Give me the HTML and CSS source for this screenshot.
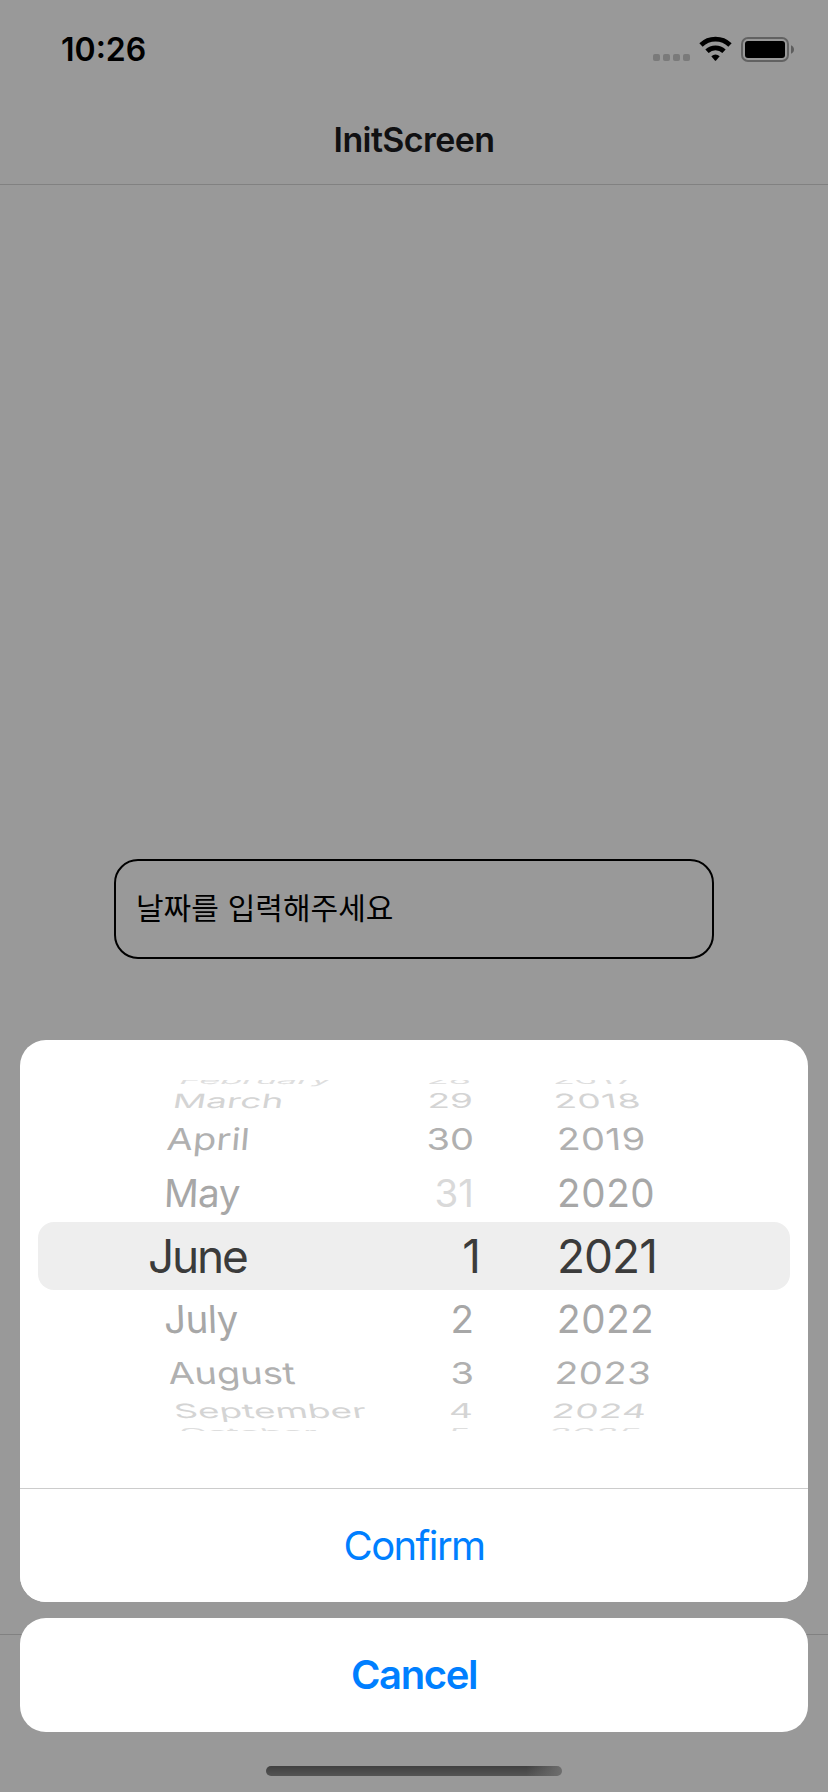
FILE: index.html
```html
<!DOCTYPE html>
<html lang="ko">
<head>
    <meta charset="UTF-8">
    <meta name="viewport" content="width=device-width, initial-scale=1.0">
    <title>InitScreen</title>
    <link rel="stylesheet" href="styles.css">
</head>
<body>
    <div class="screen">
        <div class="status-bar">
            <span class="time">10:26</span>
            <svg class="status-icons" width="146" height="30" viewBox="0 0 146 30">
                <g fill="#cbcbcb">
                    <rect x="3" y="20" width="7" height="7" rx="2"/>
                    <rect x="13" y="20" width="7" height="7" rx="2"/>
                    <rect x="23" y="20" width="7" height="7" rx="2"/>
                    <rect x="33" y="20" width="7" height="7" rx="2"/>
                </g>
                <g fill="none" stroke="#000" stroke-width="4.8">
                    <path d="M51 11 A21 21 0 0 1 80 11"/>
                    <path d="M57 17.2 A12.3 12.3 0 0 1 74 17.2"/>
                </g>
                <path d="M61.3 22.3 Q65.5 18.9 69.7 22.3 L66.1 26.4 Q65.5 27 64.9 26.4 Z"/>
                <rect x="92" y="4" width="46" height="23" rx="6" fill="none" stroke="#a4a4a4" stroke-width="2"/>
                <rect x="95" y="7" width="40" height="17" rx="3"/>
                <path d="M141 11.2 Q144 12.5 144 15.5 Q144 18.5 141 19.8 Z" fill="#9c9c9c"/>
            </svg>
        </div>
        <header class="header">
            <h1>InitScreen</h1>
        </header>
        <main class="content">
            <div class="date-input">날짜를 입력해주세요</div>
        </main>
        <div class="tab-bar"></div>
    </div>

    <div class="overlay">
        <div class="sheet">
            <div class="picker">
                <div class="selection"></div>
                <div class="wheel months">
                    <div class="item up far">February</div>
                    <div class="item up third">March</div>
                    <div class="item up second">April</div>
                    <div class="item up first">May</div>
                    <div class="item selected">June</div>
                    <div class="item down first">July</div>
                    <div class="item down second">August</div>
                    <div class="item down third">September</div>
                    <div class="item down far">October</div>
                </div>
                <div class="wheel days">
                    <div class="item up far">28</div>
                    <div class="item up third">29</div>
                    <div class="item up second">30</div>
                    <div class="item up first disabled">31</div>
                    <div class="item selected">1</div>
                    <div class="item down first">2</div>
                    <div class="item down second">3</div>
                    <div class="item down third">4</div>
                    <div class="item down far">5</div>
                </div>
                <div class="wheel years">
                    <div class="item up far">2017</div>
                    <div class="item up third">2018</div>
                    <div class="item up second">2019</div>
                    <div class="item up first">2020</div>
                    <div class="item selected">2021</div>
                    <div class="item down first">2022</div>
                    <div class="item down second">2023</div>
                    <div class="item down third">2024</div>
                    <div class="item down far">2025</div>
                </div>
            </div>
            <button class="confirm">Confirm</button>
        </div>
        <button class="cancel">Cancel</button>
        <div class="home-indicator"></div>
    </div>
</body>
</html>
```

FILE: styles.css
```css
* {
    box-sizing: border-box;
}

body {
    margin: 0;
    font-family: Inter, "Noto Sans CJK KR", sans-serif;
    background-color: #fff;
    color: #000;
}

.screen {
    height: 1792px;
    display: flex;
    flex-direction: column;
}

.status-bar {
    height: 88px;
    padding: 0 32px 0 61px;
    display: flex;
    justify-content: space-between;
}

.time {
    margin-top: 30px;
    font-size: 32px;
    line-height: 40px;
    font-weight: 600;
}

.status-icons {
    margin-top: 34px;
}

.header {
    height: 97px;
    border-bottom: 1px solid #d8d8d8;
    display: flex;
    align-items: center;
    justify-content: center;
}

.header h1 {
    margin: 8px 0 0;
    font-size: 34px;
    line-height: 40px;
    font-weight: 600;
    letter-spacing: -0.6px;
    color: #1c1c1e;
}

.content {
    flex: 1;
    display: flex;
    align-items: center;
    justify-content: center;
    padding-bottom: 1px;
}

.date-input {
    width: 600px;
    height: 100px;
    padding: 0 20px;
    border: 2px solid #000;
    border-radius: 24px;
    font-size: 30px;
    line-height: 94px;
    word-spacing: 0.5px;
}

.tab-bar {
    height: 158px;
    border-top: 1px solid #d8d8d8;
}

/* Date picker action sheet */
.overlay {
    position: absolute;
    top: 0;
    left: 0;
    width: 828px;
    height: 1792px;
    padding: 0 20px 16px;
    background-color: rgba(0, 0, 0, 0.4);
    display: flex;
    flex-direction: column;
    justify-content: flex-end;
}

.sheet {
    height: 562px;
    background-color: #fff;
    border-radius: 26px;
    overflow: hidden;
}

.picker {
    position: relative;
    height: 448px;
    padding-top: 40px;
    display: flex;
}

.selection {
    position: absolute;
    top: 182px;
    left: 18px;
    right: 18px;
    height: 68px;
    border-radius: 16px;
    background-color: #eee;
}

.wheel {
    position: relative;
    height: 351px;
    overflow: hidden;
    display: flex;
    flex-direction: column;
    justify-content: center;
}

.months {
    width: 350px;
    padding-left: 128px;
}

.days {
    width: 110px;
    text-align: right;
}

.years {
    width: 250px;
    padding-left: 77px;
}

.item {
    flex-shrink: 0;
    white-space: nowrap;
    transform-origin: left center;
}

.item.selected {
    height: 68px;
    font-size: 46px;
    line-height: 68px;
    letter-spacing: -1px;
    color: #3b3b3b;
}

.first {
    height: 58px;
    font-size: 38.5px;
    line-height: 58px;
    color: #a7a7a7;
}

.second {
    height: 50px;
    font-size: 38px;
    line-height: 50px;
    color: #b0b0b0;
}

.third {
    height: 26px;
    font-size: 37px;
    line-height: 26px;
    color: #d4d4d4;
}

.far {
    height: 16px;
    font-size: 36px;
    line-height: 16px;
    color: #dedede;
}

.disabled {
    color: #d9d9d9;
}

/* Rows tilt away from the middle of the wheel */
.months .item { padding-left: 16px; }
.months .item.selected { padding-left: 0; letter-spacing: -2.2px; }
.months .first { letter-spacing: -0.5px; }
.months .up.first { transform: skewX(-2deg); }
.months .up.second { transform: translateX(3px) skewX(-5deg) scaleY(0.8); }
.months .up.third { transform: translateX(9px) skewX(-10deg) scaleY(0.53); }
.months .up.far { transform: translateX(16px) skewX(-32deg) scaleY(0.3); }
.months .down.first { transform: skewX(2deg); }
.months .down.second { transform: translateX(4px) skewX(5deg) scaleY(0.8); }
.months .down.third { transform: translateX(10px) skewX(10deg) scaleY(0.53); }
.months .down.far { transform: translateX(16px) skewX(32deg) scaleY(0.3); }

.days .item { padding-right: 6px; }
.days .item.selected { padding-right: 0; }
.days .second { transform: scaleY(0.8); }
.days .third { transform: translateX(-1px) scaleY(0.53); }
.days .far { transform: translateX(-3px) scaleY(0.3); }

.years .first { letter-spacing: 0.7px; }
.years .second { letter-spacing: 0.7px; }
.years .third { letter-spacing: 0.8px; }
.years .far { letter-spacing: 1px; }
.years .up.first { transform: skewX(1deg); }
.years .up.second { transform: skewX(4deg) scaleY(0.8); }
.years .up.third { transform: translateX(-3px) skewX(9deg) scaleY(0.53); }
.years .up.far { transform: translateX(-6px) skewX(30deg) scaleY(0.3); }
.years .down.first { transform: skewX(-1deg); }
.years .down.second { transform: translateX(-2px) skewX(-4deg) scaleY(0.8); }
.years .down.third { transform: translateX(-5px) skewX(-9deg) scaleY(0.53); }
.years .down.far { transform: translateX(-8px) skewX(-30deg) scaleY(0.3); }

button {
    border: none;
    background-color: #fff;
    font-family: inherit;
    font-size: 40px;
    color: #007fff;
    cursor: pointer;
}

.confirm {
    width: 100%;
    height: 114px;
    border-top: 1px solid #ccc;
    font-weight: 400;
    letter-spacing: -1.6px;
}

.cancel {
    height: 114px;
    margin-top: 16px;
    padding-bottom: 3px;
    border-radius: 26px;
    font-weight: 600;
    letter-spacing: -1.4px;
}

.home-indicator {
    width: 296px;
    height: 10px;
    margin: 34px auto 0;
    border-radius: 5px;
    background: linear-gradient(to right, transparent 88%, #6e6e6e), linear-gradient(#404040, #545454);
}
```
